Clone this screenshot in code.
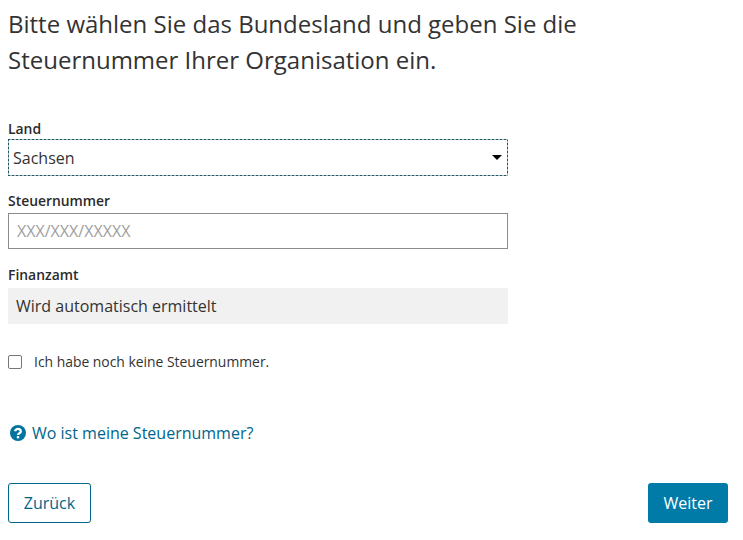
<script>
</script>

<div class="page">
  <h1>Bitte wählen Sie das Bundesland und geben Sie die Steuernummer Ihrer Organisation ein.</h1>
  <div class="form">
    <div class="field land">
      <span class="label first">Land</span>
      <div class="select"><span>Sachsen</span><i class="caret"></i></div>
    </div>
    <div class="field steuer">
      <span class="label tight">Steuernummer</span>
      <div class="input">XXX/XXX/XXXXX</div>
    </div>
    <div class="field">
      <span class="label">Finanzamt</span>
      <div class="readonly">Wird automatisch ermittelt</div>
    </div>
    <div class="check"><span class="box"></span><span>Ich habe noch keine Steuernummer.</span></div>
  </div>
  <a class="help" href="#top">
    <svg viewBox="0 0 16 16" width="16" height="16"><circle cx="8" cy="8" r="8" fill="#00739f"/><path d="M5.2 6.3a2.8 2.4 0 1 1 4.3 2c-.9.5-1.5.8-1.5 1.7" fill="none" stroke="#fff" stroke-width="2.3"/><rect x="6.8" y="11" width="2.4" height="2.4" fill="#fff"/></svg>
    Wo ist meine Steuernummer?
  </a>
  <div class="actions">
    <button class="back">Zurück</button>
    <button class="next">Weiter</button>
  </div>
</div>

<style>
  :global(body) { margin: 0; background: #fff; }
  .page { width: 743px; height: 540px; box-sizing: border-box; padding: 6px 15px 0 8px; font-family: "Open Sans", sans-serif; color: #333; overflow: hidden; }
  h1 { margin: 0; width: 600px; font-size: 24px; line-height: 36px; font-weight: 400; }
  .form { width: 500px; margin-top: 41px; display: flex; flex-direction: column; }
  .field { display: flex; flex-direction: column; margin-bottom: 15px; }
  .field.land, .field.steuer { margin-bottom: 16px; }
  .label { font-size: 13.9px; font-weight: 600; line-height: 20px; margin-bottom: 3px; color: #2b2b2b; }
  .label.first { margin-bottom: 0; }
  .label.tight { margin-bottom: 2px; }
  .select {
    height: 37px; margin-bottom: -1px; box-sizing: border-box; display: flex; align-items: center; justify-content: space-between; padding: 1px 6px 0 5px; font-size: 16px;
    background:
      repeating-linear-gradient(90deg, #14596e 0 2px, #a9b3b6 2px 4px) top / 100% 1px no-repeat,
      repeating-linear-gradient(90deg, #14596e 0 2px, #a9b3b6 2px 4px) bottom / 100% 1px no-repeat,
      repeating-linear-gradient(180deg, #14596e 0 2px, #a9b3b6 2px 4px) left / 1px 100% no-repeat,
      repeating-linear-gradient(180deg, #14596e 0 2px, #a9b3b6 2px 4px) right / 1px 100% no-repeat;
  }
  .caret { width: 0; height: 0; border: 5px solid transparent; border-top: 5px solid #000; border-bottom: 0; margin-top: -2px; }
  .input { height: 36px; box-sizing: border-box; border: 1px solid #8c8c8c; display: flex; align-items: center; padding: 0 8px; font-size: 16px; color: #a0a0a0; }
  .readonly { height: 36px; background: #f1f1f1; display: flex; align-items: center; padding: 0 8px; font-size: 16px; }
  .check { display: flex; align-items: center; gap: 12px; font-size: 13.9px; margin-top: 13px; line-height: 20px; }
  .box { width: 12px; height: 12px; border: 1px solid #767676; border-radius: 2px; }
  .help { display: flex; align-items: center; gap: 6px; margin: 50px 0 0 2px; color: #00658c; font-size: 16px; text-decoration: none; line-height: 22px; }
  .actions { display: flex; justify-content: space-between; margin-top: 39px; }
  button { height: 40px; font: 16px "Open Sans", sans-serif; border-radius: 3px; box-sizing: border-box; }
  .back { width: 83px; background: #fff; border: 1px solid #00658c; color: #00658c; }
  .next { width: 80px; background: #007ba8; border: 0; color: #fff; }
</style>
